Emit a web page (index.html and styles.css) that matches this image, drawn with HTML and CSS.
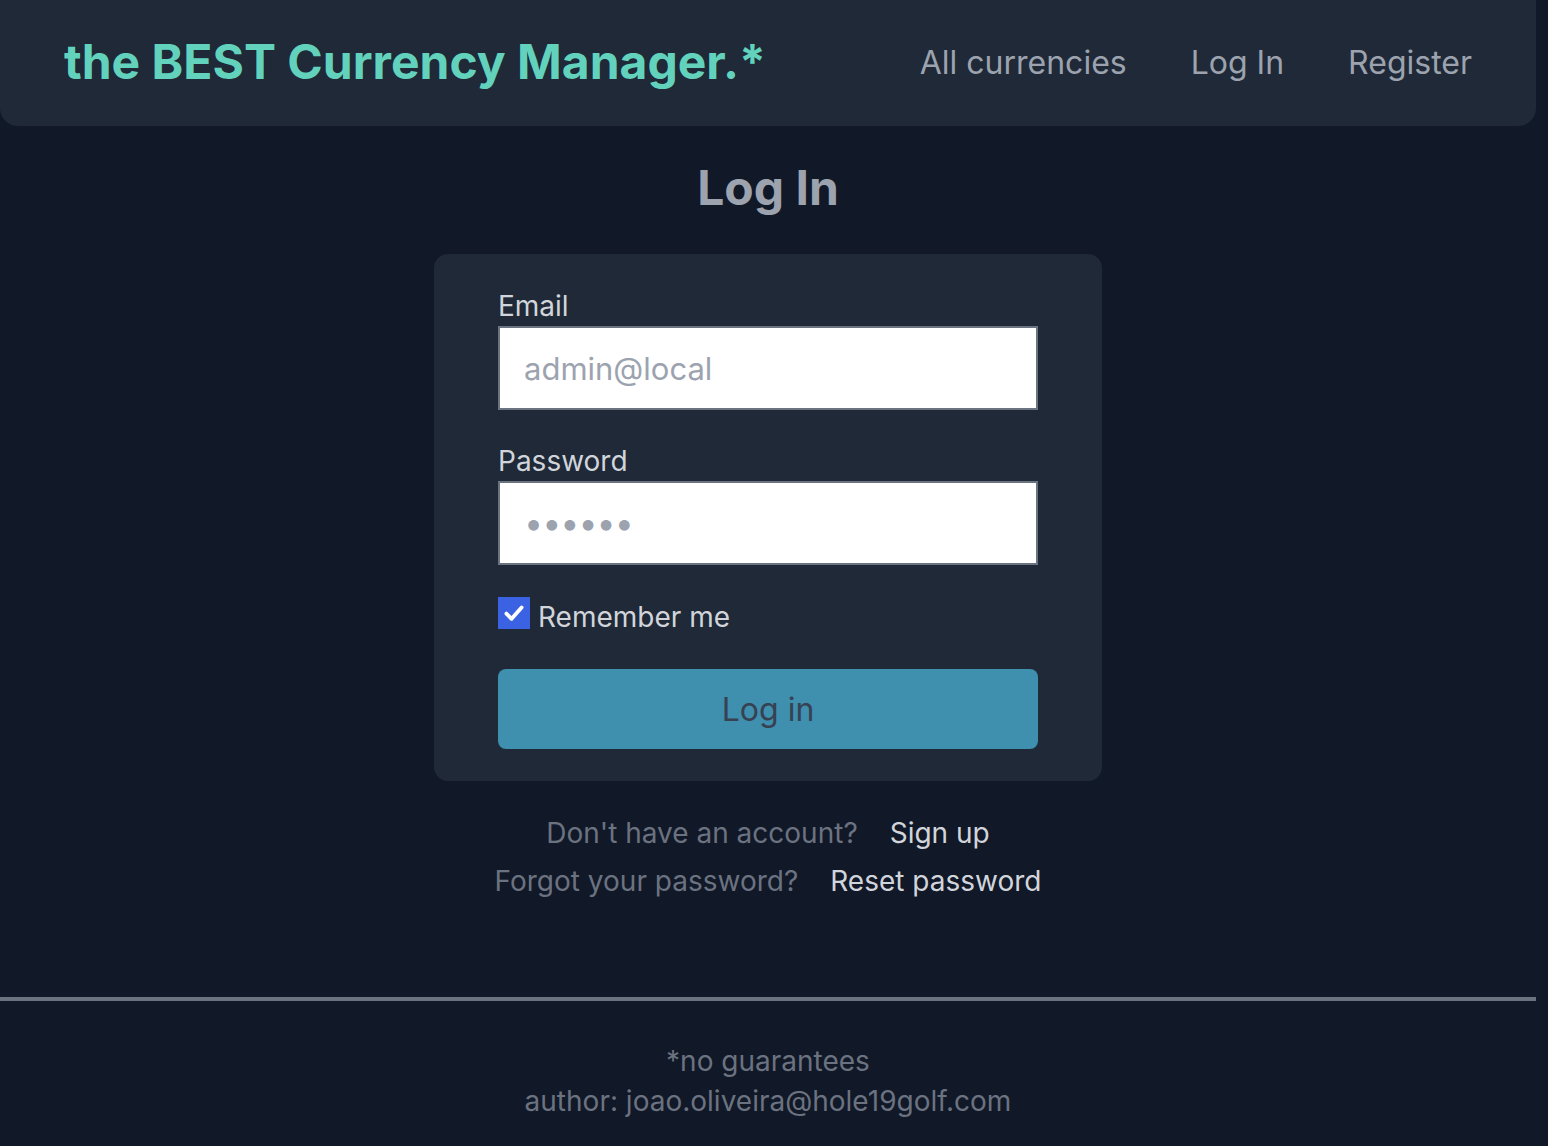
FILE: index.html
```html
<!DOCTYPE html>
<html lang="en">
<head>
<meta charset="utf-8">
<title>Log In - the BEST Currency Manager</title>
<link rel="stylesheet" href="styles.css">
</head>
<body>
<div class="page">
  <header class="topbar">
    <a class="brand" href="#">the BEST Currency Manager.*</a>
    <nav class="nav">
      <a href="#">All currencies</a>
      <a href="#">Log In</a>
      <a href="#">Register</a>
    </nav>
  </header>

  <main class="main">
    <h1 class="title">Log In</h1>
    <form class="card">
      <label class="field-label" for="email">Email</label>
      <input class="field-input" id="email" type="email" placeholder="admin@local">

      <label class="field-label second" for="password">Password</label>
      <input class="field-input password" id="password" type="password" placeholder="••••••">

      <label class="remember">
        <span class="checkbox">
          <svg viewBox="0 0 16 16" width="32" height="32" aria-hidden="true"><path d="M4.2 8.3 L6.8 10.9 L11.8 5.2" fill="none" stroke="#fff" stroke-width="1.9" stroke-linecap="round" stroke-linejoin="round"/></svg>
        </span>
        <span class="remember-text">Remember me</span>
      </label>

      <button class="submit" type="button">Log in</button>
    </form>

    <div class="links">
      <p><span class="muted">Don't have an account?</span><a href="#">Sign up</a></p>
      <p><span class="muted">Forgot your password?</span><a href="#">Reset password</a></p>
    </div>
  </main>

  <footer class="footer">
    <p>*no guarantees</p>
    <p>author: joao.oliveira@hole19golf.com</p>
  </footer>
</div>
</body>
</html>
```

FILE: styles.css
```css
* { box-sizing: border-box; }

html, body {
  margin: 0;
  padding: 0;
  background: #111827;
}

body {
  font-family: "Inter", "Noto Sans", sans-serif;
  color: #d1d5db;
  min-height: 1146px;
}

.page {
  width: 1536px;
}

a { text-decoration: none; }

.topbar {
  height: 126px;
  background: #1f2937;
  border-radius: 0 0 18px 18px;
  display: flex;
  align-items: center;
  justify-content: space-between;
  padding: 0 64px;
}

.brand {
  color: #62d2bd;
  font-weight: 700;
  font-size: 48px;
  letter-spacing: 0;
  line-height: 1;
  margin-top: -2px;
}

.nav {
  display: flex;
  gap: 64px;
}

.nav a {
  color: #9ca3af;
  font-size: 32px;
  line-height: 1;
}

.main {
  display: flex;
  flex-direction: column;
  align-items: center;
  padding-top: 34px;
}

.title {
  margin: 0;
  font-size: 48px;
  line-height: 56px;
  font-weight: 700;
  color: #9ca3af;
}

.card {
  margin-top: 38px;
  width: 668px;
  background: #1f2937;
  border-radius: 14px;
  padding: 35px 64px 32px;
  display: flex;
  flex-direction: column;
}

.field-label {
  font-size: 28px;
  line-height: 34px;
  color: #d1d5db;
}

.field-label.second {
  margin-top: 34px;
}

.field-input {
  margin-top: 3px;
  height: 84px;
  width: 100%;
  border: 2px solid #6b7280;
  border-radius: 0;
  background: #fff;
  padding: 0 24px;
  font-family: inherit;
  font-size: 31px;
  color: #111827;
  outline: none;
}

.field-input::placeholder {
  color: #9ca3af;
}

.field-input.password::placeholder {
  font-size: 34px;
  letter-spacing: -1px;
}

.remember {
  margin-top: 32px;
  display: flex;
  align-items: center;
  gap: 8px;
  height: 32px;
  font-size: 28px;
  line-height: 32px;
  color: #d1d5db;
}

.remember-text {
  padding-top: 8px;
  line-height: 32px;
}

.checkbox {
  width: 32px;
  height: 32px;
  background: #3a62e3;
  display: block;
  flex: none;
}

.checkbox svg { display: block; }

.submit {
  margin-top: 40px;
  height: 80px;
  border: none;
  border-radius: 8px;
  background: #3f8faf;
  color: #374151;
  font-family: inherit;
  font-size: 32px;
  padding: 0;
}

.links {
  margin-top: 28px;
  text-align: center;
  font-size: 28px;
  line-height: 48px;
}

.links p { margin: 0; }

.links .muted {
  color: #6b7280;
  margin-right: 32px;
}

.links a {
  color: #d1d5db;
}

.footer {
  margin-top: 92px;
  border-top: 4px solid #6b7280;
  padding-top: 40px;
  text-align: center;
  color: #6b7280;
  font-size: 28px;
  line-height: 40px;
}

.footer p { margin: 0; }
```
